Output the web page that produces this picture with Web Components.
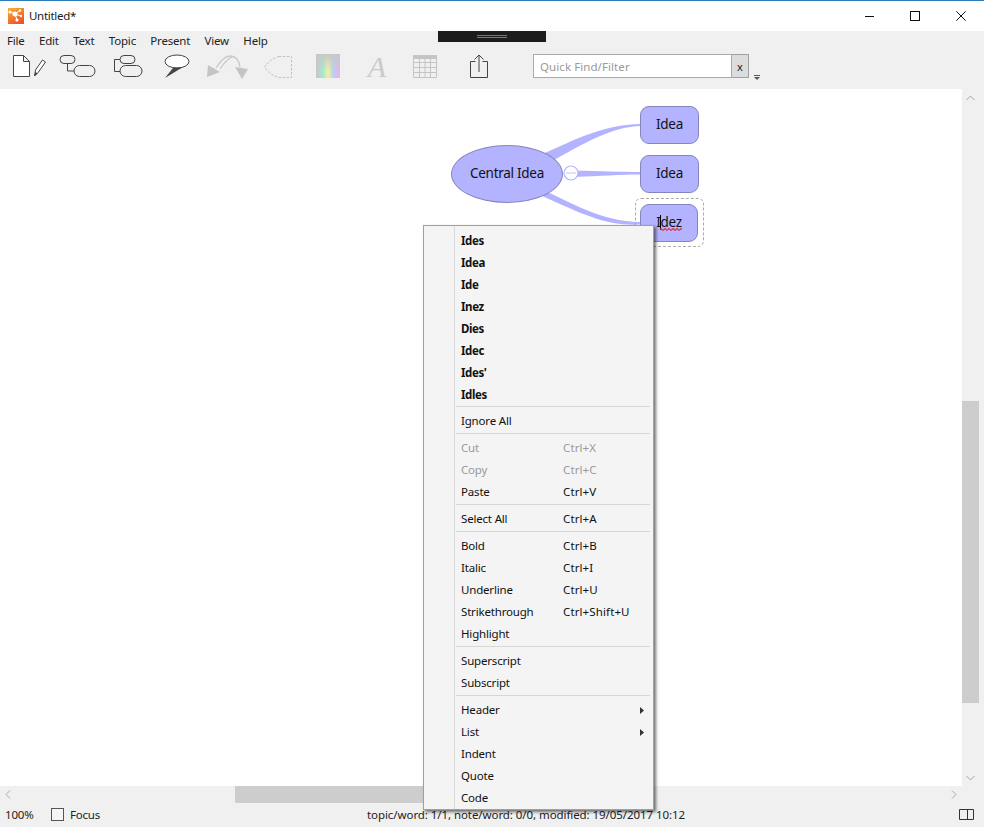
<!DOCTYPE html>
<html>
<head>
<meta charset="utf-8">
<title>Untitled*</title>
<style>
html, body { margin: 0; height: 100%; overflow: hidden; background: #fff; }
body { font-family: "Noto Sans", "Liberation Sans", sans-serif; font-size: 11.5px; color: #1a1a1a; }
</style>
</head>
<body>
<app-window></app-window>
<script>
class TitleBar extends HTMLElement {
    constructor() {
        super();
        this.attachShadow({mode: 'open'});
        this.shadowRoot.innerHTML = `
            <style>
                :host { display: flex; align-items: center; height: 30px; background: #fff; border-top: 1px solid #2b7ab9; padding-left: 8px; position: relative; }
                .logo { width: 16px; height: 16px; display: block; margin-top: -1px; }
                .name { margin-left: 5px; font-size: 11.5px; letter-spacing: -.3px; margin-top: -1px; }
                .btns { margin-left: auto; display: flex; height: 100%; }
                .btn { width: 46px; height: 30px; display: flex; align-items: center; justify-content: center; }
                .grip { position: absolute; left: 438px; top: 30px; width: 108px; height: 11px; background: #1c1c1c; display: flex; align-items: center; justify-content: center; z-index: 2; }
                .grip i { display: block; width: 30px; height: 3px; border-top: 1px solid #777; border-bottom: 1px solid #777; box-sizing: border-box; }
            </style>
            <svg class="logo" viewBox="0 0 16 16">
                <defs><linearGradient id="lg" x1="0" y1="0" x2=".6" y2="1"><stop offset="0" stop-color="#fab035"/><stop offset="1" stop-color="#ee5526"/></linearGradient></defs>
                <rect width="16" height="16" fill="url(#lg)"/>
                <path d="M2 4 7 6 12 2.500M7 6 13 8M7 6 9 12" stroke="#fff" stroke-width="1" fill="none"/>
                <circle cx="7" cy="6" r="2.500" fill="#fff"/><circle cx="2" cy="4" r="1.500" fill="#fff"/><circle cx="12" cy="2.500" r="1.200" fill="#fff"/><circle cx="13" cy="8" r="1.200" fill="#fff"/><circle cx="9" cy="12" r="1.600" fill="#fff"/>
            </svg>
            <span class="name">Untitled*</span>
            <div class="btns">
                <div class="btn"><svg width="10" height="10"><path d="M1 5.500h9" stroke="#111"/></svg></div>
                <div class="btn"><svg width="10" height="10"><rect x=".5" y=".5" width="9" height="9" fill="none" stroke="#111"/></svg></div>
                <div class="btn"><svg width="10" height="10"><path d="M.3.3l9.400 9.400M9.700.3.3 9.700" stroke="#111"/></svg></div>
            </div>
            <div class="grip"><i></i></div>
        `;
    }
}
customElements.define('title-bar', TitleBar);

class MenuBar extends HTMLElement {
    constructor() {
        super();
        this.attachShadow({mode: 'open'});
        const items = ['File', 'Edit', 'Text', 'Topic', 'Present', 'View', 'Help'];
        this.shadowRoot.innerHTML = `
            <style>
                :host { display: flex; gap: 14.4px; height: 21px; box-sizing: border-box; align-items: center; padding: 0 0 2px 7px; font-size: 11.5px; color: #222; letter-spacing: -.2px; }
            </style>
            ${items.map(i => `<span>${i}</span>`).join('')}
        `;
    }
}
customElements.define('menu-bar', MenuBar);

class ToolBar extends HTMLElement {
    constructor() {
        super();
        this.attachShadow({mode: 'open'});
        this.shadowRoot.innerHTML = `
            <style>
                :host { display: flex; height: 37px; align-items: flex-start; box-sizing: border-box; padding-top: 2px; }
                svg { display: block; flex: none; }
                .letter { flex: none; width: 22px; height: 25px; margin-left: 26px; font: italic 30px/25px "Liberation Serif", serif; color: #cacaca; text-align: center; }
                .find { display: flex; height: 24px; margin-left: 45px; flex: none; }
                .find .field { width: 199px; box-sizing: border-box; border: 1px solid #a9a9a9; background: #fff; color: #9a9a9a; font-size: 11.5px; line-height: 23px; padding-left: 6px; letter-spacing: .08px; }
                .find .x { width: 17px; box-sizing: border-box; border: 1px solid #a0a0a0; border-left: 0; background: #dcdcdc; color: #222; font-size: 11px; line-height: 23px; text-align: center; }
                .more { margin: 21px 0 0 5px; }
            </style>
            <svg width="36" height="25" style="margin-left:12px" viewBox="0 0 36 25" fill="none">
                <path d="M1.500 1.500h10l6 6v15h-16zM11.500 1.500v6h6" stroke="#444" fill="#fff"/>
                <path d="M22.500 22l1-6 7-10 3 2-7 10z" stroke="#444" fill="#fff"/><path d="M22.500 22l1-4 2 1.500z" fill="#333"/>
            </svg>
            <svg width="37" height="25" style="margin-left:11px" viewBox="0 0 37 25" fill="none" stroke="#444">
                <rect x="1" y="1.500" width="15" height="8" rx="4"/>
                <rect x="15" y="11.500" width="21" height="11" rx="5.500"/>
                <path d="M8.500 9.500v7.500h6.500"/>
            </svg>
            <svg width="30" height="25" style="margin-left:17px" viewBox="0 0 30 25" fill="none" stroke="#444">
                <rect x="7" y="1.500" width="15" height="8" rx="4"/>
                <rect x="7" y="11.500" width="22" height="11" rx="5.500"/>
                <path d="M7 5.500H1.500v12H7"/>
            </svg>
            <svg width="26" height="25" style="margin-left:21px" viewBox="0 0 26 25">
                <ellipse cx="13" cy="7.500" rx="12" ry="6.500" fill="#fff" stroke="#444"/>
                <path d="M9 14 1 24 19 13z" fill="#444"/>
            </svg>
            <svg width="42" height="25" style="margin-left:17px" viewBox="0 0 42 25">
                <path d="M9 14C14 6 18 2 23 2c6 0 9 4 10 11M13 15C17 9 20 5 25 3" fill="none" stroke="#c8c8c8" stroke-width="1.300"/>
                <path d="M0 23 1 11l12 7zM28 13l13 2-6 10z" fill="#c4c4c4"/>
            </svg>
            <svg width="30" height="25" style="margin-left:14px" viewBox="0 0 30 25" fill="none">
                <path d="M16 2.500h12.500v21H16C10 22 5 18 1.500 13 5 8 10 4 16 2.500z" stroke="#c2c2c2" stroke-dasharray="2.500 1.500"/>
            </svg>
            <svg width="24" height="25" style="margin-left:23px" viewBox="0 0 24 25">
                <defs>
                    <linearGradient id="rb" x1="0" y1="0" x2="1" y2="0"><stop offset="0" stop-color="#c5c5c5"/><stop offset=".3" stop-color="#a9e8d0"/><stop offset=".5" stop-color="#f2f2a0"/><stop offset=".72" stop-color="#b8d0f2"/><stop offset="1" stop-color="#eeb0e4"/></linearGradient>
                    <linearGradient id="fd" x1="0" y1="0" x2="0" y2="1"><stop offset="0" stop-color="#c8c8c8"/><stop offset=".7" stop-color="#c8c8c8" stop-opacity="0"/></linearGradient>
                </defs>
                <rect width="24" height="24" fill="url(#rb)"/><rect width="24" height="24" fill="url(#fd)"/>
            </svg>
            <div class="letter">A</div>
            <svg width="24" height="25" style="margin-left:25px" viewBox="0 0 24 25" fill="none" stroke="#c4c4c4">
                <path d="M.5 1.500h23v22H.5zM.5 8.500h23M.5 13.500h23M.5 18.500h23M6.500 1.500v22M12 1.500v22M17.500 1.500v22"/>
                <path d="M.5 1.500h23v3H.5z" fill="#c4c4c4"/>
            </svg>
            <svg width="18" height="25" style="margin-left:33px" viewBox="0 0 18 25" fill="none" stroke="#444">
                <path d="M5.500 7.500H.5v16h17v-16h-5M9 18V1M4.500 5.500 9 1l4.500 4.500"/>
            </svg>
            <div class="find"><div class="field">Quick Find/Filter</div><div class="x">x</div></div>
            <svg class="more" width="6" height="5" viewBox="0 0 6 5"><path d="M0 .5h6" stroke="#555"/><path d="M0 2h6L3 5z" fill="#555"/></svg>
        `;
    }
}
customElements.define('tool-bar', ToolBar);

class MapNode extends HTMLElement {
    constructor() {
        super();
        this.attachShadow({mode: 'open'});
        this.shadowRoot.innerHTML = `
            <style>
                :host { position: absolute; display: flex; box-sizing: border-box; align-items: center; justify-content: center; background: #b3b3ff; border: 1px solid #8686bd; border-radius: 9px; font-size: 13.5px; color: #111; letter-spacing: -.28px; padding-bottom: 3px; }
                :host([shape=oval]) { border-radius: 50%; }
            </style>
            <slot></slot>
        `;
    }
}
customElements.define('map-node', MapNode);

class MindMap extends HTMLElement {
    constructor() {
        super();
        this.attachShadow({mode: 'open'});
        // offsets are relative to the canvas, which starts at y=89
        this.shadowRoot.innerHTML = `
            <style>
                :host { display: block; position: absolute; inset: 0; }
                svg { position: absolute; left: 0; top: 0; }
                .sel { position: absolute; left: 635px; top: 109px; width: 69px; height: 49px; box-sizing: border-box; border: 1px dashed #aaa; border-radius: 6px; }
                .edit { position: absolute; left: 660px; top: 126px; width: 1px; height: 15px; background: #000; z-index: 2; }
                .wavy { position: absolute; left: 660px; top: 139px; z-index: 2; }
            </style>
            <svg width="962" height="300" viewBox="0 89 962 300" fill="#b3b3ff">
                <path d="M540 155C565 145 600 124 641 124v2C612 127 590 140 545 165z"/>
                <path d="M575 170.500C600 171 620 172 641 172v2.500C620 174.500 600 176 575 177z"/>
                <path d="M540 189C570 201 600 222 641 222v2.500C605 226 585 215 540 195z"/>
                <circle cx="571" cy="173" r="7" fill="#fff" stroke="#b3b3ff" stroke-width="1.200"/>
                <path d="M566 173h10" stroke="#c4c4f0"/>
            </svg>
            <div class="sel"></div>
            <map-node shape="oval" style="left:451px;top:56px;width:112px;height:58px">Central Idea</map-node>
            <map-node style="left:640px;top:17px;width:59px;height:38px">Idea</map-node>
            <map-node style="left:640px;top:66px;width:59px;height:38px">Idea</map-node>
            <map-node style="left:640px;top:115px;width:58px;height:38px">Idez</map-node>
            <div class="edit"></div>
            <svg class="wavy" width="22" height="3" viewBox="0 0 22 3"><path d="M0 1.500q1-1.500 2 0t2 0 2 0 2 0 2 0 2 0 2 0 2 0 2 0 2 0 2 0" fill="none" stroke="#e0304e" stroke-width="1.300"/></svg>
        `;
    }
}
customElements.define('mind-map', MindMap);

class ScrollBars extends HTMLElement {
    constructor() {
        super();
        this.attachShadow({mode: 'open'});
        this.shadowRoot.innerHTML = `
            <style>
                :host { display: contents; }
                .v { position: absolute; right: 0; top: 0; bottom: 0; width: 22px; background: #f0f0f0; }
                .v i { position: absolute; left: 0; top: 312px; width: 17px; height: 302px; background: #cdcdcd; }
                .h { position: absolute; left: 0; right: 0; bottom: 0; height: 17px; background: #f0f0f0; }
                .h i { position: absolute; left: 235px; top: 0; width: 410px; height: 17px; background: #cdcdcd; }
                svg { position: absolute; }
            </style>
            <div class="v"><i></i>
                <svg style="left:4px;top:6px" width="9" height="6"><path d="M.5 5 4.500 1l4 4" fill="none" stroke="#a8a8a8"/></svg>
                <svg style="left:4px;bottom:22px" width="9" height="6"><path d="M.5 1l4 4 4-4" fill="none" stroke="#a8a8a8"/></svg>
            </div>
            <div class="h"><i></i>
                <svg style="left:5px;top:4px" width="6" height="9"><path d="M5 .5l-4 4 4 4" fill="none" stroke="#a8a8a8"/></svg>
                <svg style="left:951px;top:4px" width="6" height="9"><path d="M1 .5l4 4-4 4" fill="none" stroke="#a8a8a8"/></svg>
            </div>
        `;
    }
}
customElements.define('scroll-bars', ScrollBars);

class StatusBar extends HTMLElement {
    constructor() {
        super();
        this.attachShadow({mode: 'open'});
        this.shadowRoot.innerHTML = `
            <style>
                :host { display: flex; align-items: center; height: 24px; box-sizing: border-box; background: #f0f0f0; font-size: 11.5px; color: #222; position: relative; padding: 0 0 2px 5px; letter-spacing: -.2px; }
                .pct { width: 28px; flex: none; }
                .box { width: 13px; height: 13px; box-sizing: border-box; border: 1px solid #555; background: #f5f5f5; margin: 0 6px 0 18px; }
                .info { position: absolute; left: 367px; top: 0; line-height: 24px; white-space: nowrap; letter-spacing: -.07px; }
                svg { margin-left: auto; margin-right: 10px; display: block; }
            </style>
            <span class="pct">100%</span>
            <div class="box"></div>
            <span>Focus</span>
            <span class="info">topic/word: 1/1, note/word: 0/0, modified: 19/05/2017 10:12</span>
            <svg width="15" height="11"><path d="M.5.5h14v10H.5zM8.500.5v10" fill="none" stroke="#333"/></svg>
        `;
    }
}
customElements.define('status-bar', StatusBar);

class MenuItem extends HTMLElement {
    constructor() {
        super();
        this.attachShadow({mode: 'open'});
        const key = this.getAttribute('key') || '';
        const sub = this.hasAttribute('sub');
        this.shadowRoot.innerHTML = `
            <style>
                :host { display: grid; grid-template-columns: 102px 77px auto; align-items: center; box-sizing: border-box; height: 22px; padding: 0 0 2px 37px; font-size: 11.5px; color: #111; letter-spacing: -.18px; white-space: nowrap; }
                :host([bold]) { font-weight: 700; letter-spacing: -.4px; padding-bottom: 0; }
                :host([off]) { color: #9a9a9a; }
                .key { letter-spacing: .12px; }
                svg { display: block; margin-top: 2px; }
            </style>
            <span><slot></slot></span>
            <span class="key">${key}</span>
            ${sub ? '<svg width="4" height="7"><path d="M0 0l4 3.500L0 7z" fill="#333"/></svg>' : ''}
        `;
    }
}
customElements.define('menu-item', MenuItem);

class MenuSep extends HTMLElement {
    constructor() {
        super();
        this.attachShadow({mode: 'open'});
        this.shadowRoot.innerHTML = `
            <style>
                :host { display: block; height: 1px; margin: 1px 3px 3px 32px; background: #d7d7d7; }
            </style>
        `;
    }
}
customElements.define('menu-sep', MenuSep);

class ContextMenu extends HTMLElement {
    constructor() {
        super();
        this.attachShadow({mode: 'open'});
        this.shadowRoot.innerHTML = `
            <style>
                :host { position: absolute; left: 423px; top: 225px; width: 231px; height: 585px; box-sizing: border-box; z-index: 5; display: block; background: #f4f4f4; border: 1px solid #a0a0a0; padding-top: 3px; box-shadow: 2px 2px 3px rgba(0,0,0,.55); }
                .gutter { position: absolute; left: 30px; top: 0; bottom: 0; width: 1px; background: #d9d9d9; }
            </style>
            <div class="gutter"></div>
            <slot></slot>
        `;
    }
}
customElements.define('context-menu', ContextMenu);

class AppWindow extends HTMLElement {
    constructor() {
        super();
        this.attachShadow({mode: 'open'});
        this.shadowRoot.innerHTML = `
            <style>
                :host { display: flex; flex-direction: column; height: 827px; width: 984px; position: relative; overflow: hidden; }
                .top { background: #f0f0f0; flex: none; }
                .main { flex: 1; position: relative; background: #fff; overflow: hidden; }
                title-bar, status-bar { flex: none; }
            </style>
            <title-bar></title-bar>
            <div class="top">
                <menu-bar></menu-bar>
                <tool-bar></tool-bar>
            </div>
            <div class="main">
                <mind-map></mind-map>
                <scroll-bars></scroll-bars>
            </div>
            <status-bar></status-bar>
            <context-menu>
                <menu-item bold>Ides</menu-item>
                <menu-item bold>Idea</menu-item>
                <menu-item bold>Ide</menu-item>
                <menu-item bold>Inez</menu-item>
                <menu-item bold>Dies</menu-item>
                <menu-item bold>Idec</menu-item>
                <menu-item bold>Ides'</menu-item>
                <menu-item bold>Idles</menu-item>
                <menu-sep></menu-sep>
                <menu-item>Ignore All</menu-item>
                <menu-sep></menu-sep>
                <menu-item off key="Ctrl+X">Cut</menu-item>
                <menu-item off key="Ctrl+C">Copy</menu-item>
                <menu-item key="Ctrl+V">Paste</menu-item>
                <menu-sep></menu-sep>
                <menu-item key="Ctrl+A">Select All</menu-item>
                <menu-sep></menu-sep>
                <menu-item key="Ctrl+B">Bold</menu-item>
                <menu-item key="Ctrl+I">Italic</menu-item>
                <menu-item key="Ctrl+U">Underline</menu-item>
                <menu-item key="Ctrl+Shift+U">Strikethrough</menu-item>
                <menu-item>Highlight</menu-item>
                <menu-sep></menu-sep>
                <menu-item>Superscript</menu-item>
                <menu-item>Subscript</menu-item>
                <menu-sep></menu-sep>
                <menu-item sub>Header</menu-item>
                <menu-item sub>List</menu-item>
                <menu-item>Indent</menu-item>
                <menu-item>Quote</menu-item>
                <menu-item>Code</menu-item>
            </context-menu>
        `;
    }
}
customElements.define('app-window', AppWindow);
</script>
</body>
</html>
